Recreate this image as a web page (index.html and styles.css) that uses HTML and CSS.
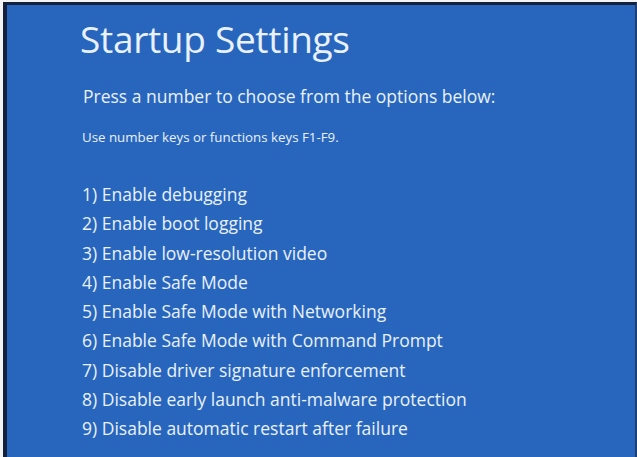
FILE: index.html
```html
<!DOCTYPE html>
<html>
<head>
<meta charset="utf-8">
<link rel="stylesheet" href="styles.css">
</head>
<body>
<div class="screen">
  <div class="content">
    <h1 class="title">Startup Settings</h1>
    <p class="prompt">Press a number to choose from the options below:</p>
    <p class="hint">Use number keys or functions keys F1-F9.</p>
    <ol class="options">
      <li>1) Enable debugging</li>
      <li>2) Enable boot logging</li>
      <li>3) Enable low-resolution video</li>
      <li>4) Enable Safe Mode</li>
      <li>5) Enable Safe Mode with Networking</li>
      <li>6) Enable Safe Mode with Command Prompt</li>
      <li>7) Disable driver signature enforcement</li>
      <li>8) Disable early launch anti-malware protection</li>
      <li>9) Disable automatic restart after failure</li>
    </ol>
  </div>
</div>
</body>
</html>
```
FILE: styles.css
```css
html, body {
  margin: 0;
  padding: 0;
  height: 100%;
  background: #f4f4f4;
  overflow: hidden;
}
.screen {
  box-sizing: border-box;
  margin: 2px 0 0 3px;
  height: calc(100% - 2px);
  background: #2866bd;
  border-top: 3px solid #14213a;
  border-left: 4px solid #14213a;
  border-right: 2px solid #1d3f73;
  font-family: "Open Sans", "Noto Sans", sans-serif;
  color: #e9f1fb;
}
.content {
  padding: 12px 0 0 73px;
}
.title {
  margin: 0;
  font-size: 37px;
  font-weight: 400;
  line-height: 44px;
  letter-spacing: -0.3px;
}
.prompt {
  margin: 24px 0 0 3px;
  font-size: 17.5px;
  line-height: 22px;
}
.hint {
  margin: 22px 0 0 2px;
  font-size: 13.3px;
  line-height: 16px;
}
.options {
  list-style: none;
  margin: 35px 0 0 2px;
  padding: 0;
  font-size: 17.5px;
  line-height: 29.3px;
}
```
